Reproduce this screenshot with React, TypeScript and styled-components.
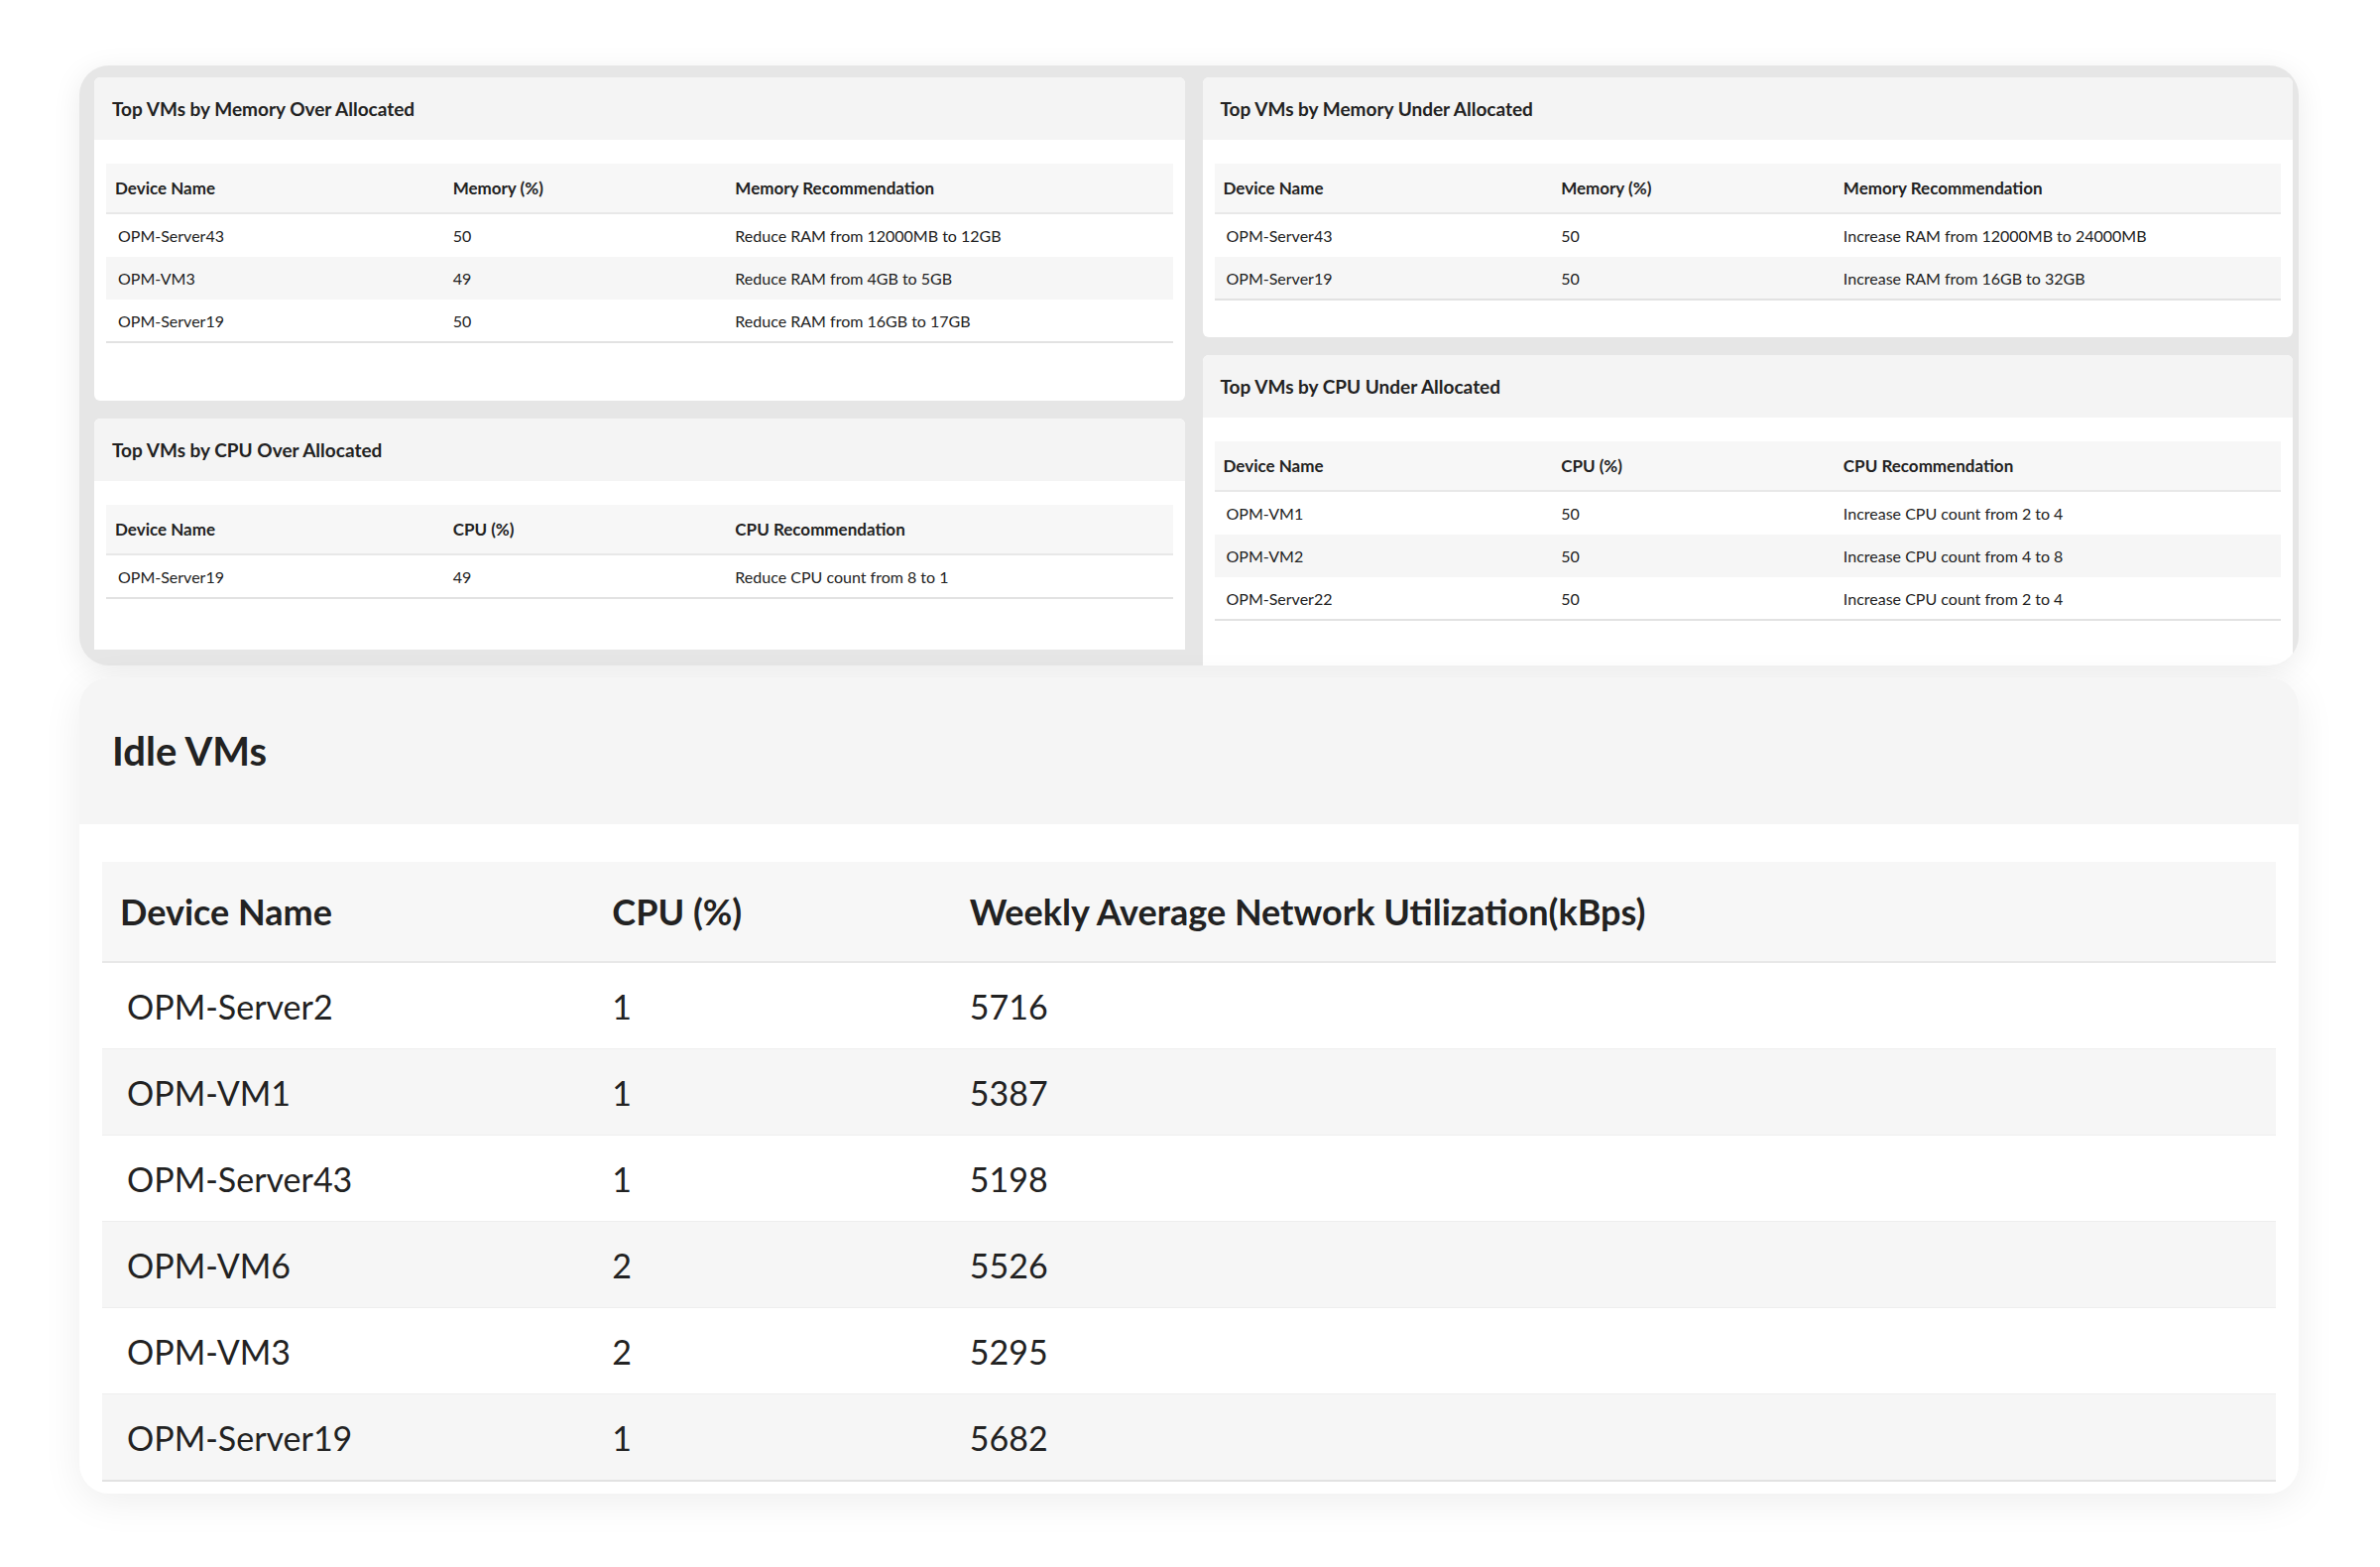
import styled, { createGlobalStyle } from 'styled-components';

const Global = createGlobalStyle`
  body { margin: 0; background: #fff; font-family: Lato, "Open Sans", sans-serif; color: #222; }
`;

const Page = styled.div`
  padding: 66px 82px 60px 80px;
  display: flex;
  flex-direction: column;
  gap: 12px;
`;

const TopBox = styled.div`
  background: #e6e6e6;
  border-radius: 30px;
  padding: 12px 6px 0 15px;
  display: grid;
  grid-template-columns: 1fr 1fr;
  column-gap: 18px;
  height: 593px;
  box-shadow: 0 6px 30px rgba(0, 0, 0, 0.08);
  overflow: hidden;
`;

const Column = styled.div<{ $fill?: boolean }>`
  display: flex;
  flex-direction: column;
  gap: 18px;
  padding-bottom: ${(p) => (p.$fill ? '0' : '16px')};
`;

const Panel = styled.div<{ $h?: number; $grow?: boolean }>`
  background: #fff;
  border-radius: 6px 6px ${(p) => (p.$grow ? '0 0' : '6px 6px')};
  ${(p) => (p.$h ? `height: ${p.$h}px;` : '')}
  ${(p) => (p.$grow ? 'flex: 1;' : '')}
  overflow: hidden;
`;

const PanelTitle = styled.div`
  background: #f4f4f4;
  height: 63px;
  display: flex;
  align-items: center;
  padding: 0 18px;
  font-weight: 700;
  font-size: 19px;
`;

const Table = styled.table<{ $big?: boolean }>`
  border-collapse: collapse;
  width: calc(100% - ${(p) => (p.$big ? 46 : 24)}px);
  margin: ${(p) => (p.$big ? '38px 23px 0' : '24px 12px 0')};
  table-layout: fixed;
  border-bottom: 2px solid #e2e2e2;
`;

const Th = styled.th<{ $big?: boolean; $w?: string }>`
  text-align: left;
  background: #f7f7f7;
  font-weight: 700;
  font-size: ${(p) => (p.$big ? '36px' : '17px')};
  height: ${(p) => (p.$big ? '100px' : '49px')};
  padding: 0 ${(p) => (p.$big ? '18px' : '9px')};
  border-bottom: 2px solid #e8e8e8;
  ${(p) => (p.$w ? `width: ${p.$w};` : '')}
`;

const Tr = styled.tr`
  &:nth-child(even) td { background: #f6f6f6; }
`;

const Td = styled.td<{ $big?: boolean }>`
  font-size: ${(p) => (p.$big ? '34px' : '16px')};
  height: ${(p) => (p.$big ? '86px' : '42px')};
  padding: 0 ${(p) => (p.$big ? '25px' : '12px')};
  border-bottom: 1px solid ${(p) => (p.$big ? '#eeeeee' : 'transparent')};
  &:not(:first-child) { padding-left: ${(p) => (p.$big ? '18px' : '9px')}; }
`;

const IdleBox = styled.div`
  border-radius: 30px;
  background: #fff;
  box-shadow: 0 8px 40px rgba(0, 0, 0, 0.07);
  overflow: hidden;
  padding-bottom: 12px;
`;

const IdleHead = styled.div`
  background: #f5f5f5;
  height: 148px;
  display: flex;
  align-items: center;
  padding-left: 33px;
  font-size: 40px;
  font-weight: 700;
`;

type Row = string[];

function SmallTable({ title, cols, rows, h, grow }: { title: string; cols: string[]; rows: Row[]; h?: number; grow?: boolean }) {
  return (
    <Panel $h={h} $grow={grow}>
      <PanelTitle>{title}</PanelTitle>
      <Table>
        <thead>
          <tr>
            <Th $w="30%">{cols[0]}</Th>
            <Th $w="24.8%">{cols[1]}</Th>
            <Th>{cols[2]}</Th>
          </tr>
        </thead>
        <tbody>
          {rows.map((r, i) => (
            <Tr key={i}>
              {r.map((c, j) => <Td key={j}>{c}</Td>)}
            </Tr>
          ))}
        </tbody>
      </Table>
    </Panel>
  );
}

const idle: Row[] = [
  ['OPM-Server2', '1', '5716'],
  ['OPM-VM1', '1', '5387'],
  ['OPM-Server43', '1', '5198'],
  ['OPM-VM6', '2', '5526'],
  ['OPM-VM3', '2', '5295'],
  ['OPM-Server19', '1', '5682'],
];

export default function App() {
  return (
    <>
      <Global />
      <Page>
        <TopBox>
          <Column>
            <SmallTable
              h={326}
              title="Top VMs by Memory Over Allocated"
              cols={['Device Name', 'Memory (%)', 'Memory Recommendation']}
              rows={[
                ['OPM-Server43', '50', 'Reduce RAM from 12000MB to 12GB'],
                ['OPM-VM3', '49', 'Reduce RAM from 4GB to 5GB'],
                ['OPM-Server19', '50', 'Reduce RAM from 16GB to 17GB'],
              ]}
            />
            <SmallTable
              grow
              title="Top VMs by CPU Over Allocated"
              cols={['Device Name', 'CPU (%)', 'CPU Recommendation']}
              rows={[['OPM-Server19', '49', 'Reduce CPU count from 8 to 1']]}
            />
          </Column>
          <Column $fill>
            <SmallTable
              h={262}
              title="Top VMs by Memory Under Allocated"
              cols={['Device Name', 'Memory (%)', 'Memory Recommendation']}
              rows={[
                ['OPM-Server43', '50', 'Increase RAM from 12000MB to 24000MB'],
                ['OPM-Server19', '50', 'Increase RAM from 16GB to 32GB'],
              ]}
            />
            <SmallTable
              grow
              title="Top VMs by CPU Under Allocated"
              cols={['Device Name', 'CPU (%)', 'CPU Recommendation']}
              rows={[
                ['OPM-VM1', '50', 'Increase CPU count from 2 to 4'],
                ['OPM-VM2', '50', 'Increase CPU count from 4 to 8'],
                ['OPM-Server22', '50', 'Increase CPU count from 2 to 4'],
              ]}
            />
          </Column>
        </TopBox>
        <IdleBox>
          <IdleHead>Idle VMs</IdleHead>
          <Table $big>
            <thead>
              <tr>
                <Th $big $w="21%">Device Name</Th>
                <Th $big $w="14.8%">CPU (%)</Th>
                <Th $big>Weekly Average Network Utilization(kBps)</Th>
              </tr>
            </thead>
            <tbody>
              {idle.map((r, i) => (
                <Tr key={i}>
                  {r.map((c, j) => <Td $big key={j}>{c}</Td>)}
                </Tr>
              ))}
            </tbody>
          </Table>
        </IdleBox>
      </Page>
    </>
  );
}
